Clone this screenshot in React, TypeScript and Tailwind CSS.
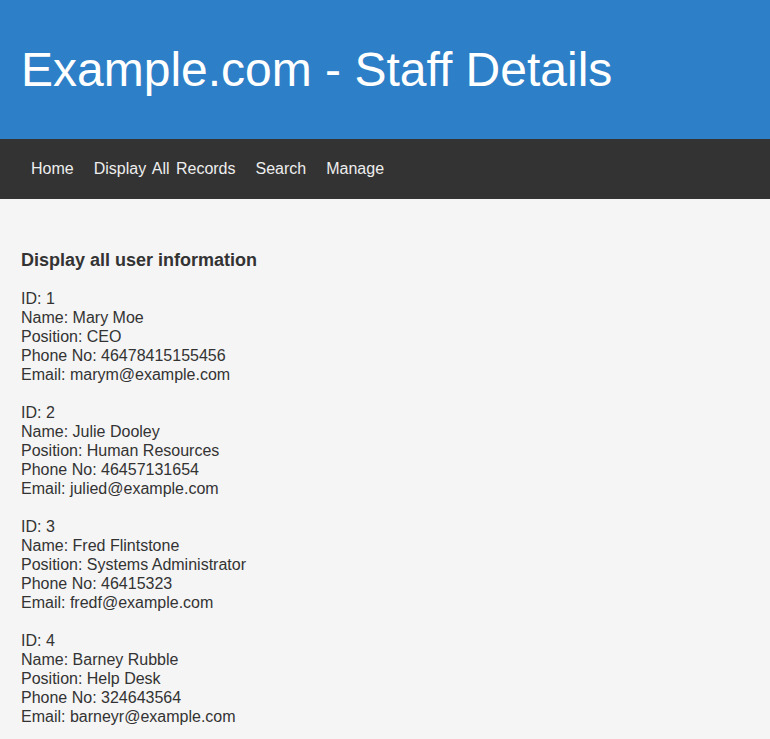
const staff = [
  { id: 1, name: "Mary Moe", position: "CEO", phone: "46478415155456", email: "marym@example.com" },
  { id: 2, name: "Julie Dooley", position: "Human Resources", phone: "46457131654", email: "julied@example.com" },
  { id: 3, name: "Fred Flintstone", position: "Systems Administrator", phone: "46415323", email: "fredf@example.com" },
  { id: 4, name: "Barney Rubble", position: "Help Desk", phone: "324643564", email: "barneyr@example.com" },
];

const links = ["Home", "Display All Records", "Search", "Manage"];

export default function App() {
  return (
    <div className="min-h-screen bg-[#f5f5f5] text-[#333333] font-['Liberation_Sans',Arial,sans-serif]">
      <header className="h-[139px] bg-[#2d7fc7] flex items-center px-[21px]">
        <h1 className="text-[48px] leading-none text-white font-normal">Example.com - Staff Details</h1>
      </header>
      <nav className="h-[60px] bg-[#333333] flex items-center pl-[21px]">
        {links.map((l) => (
          <a key={l} href="#" className="px-[10px] text-[16px] text-[#eeeeee] no-underline [word-spacing:2px]">
            {l}
          </a>
        ))}
      </nav>
      <main className="px-[21px] pt-[50px] pb-[20px]">
        <h3 className="text-[18px] leading-[22px] font-bold mb-[18px]">Display all user information</h3>
        {staff.map((s) => (
          <div key={s.id} className="text-[16px] leading-[19px] mb-[19px]">
            <div>ID: {s.id}</div>
            <div>Name: {s.name}</div>
            <div>Position: {s.position}</div>
            <div>Phone No: {s.phone}</div>
            <div>Email: {s.email}</div>
          </div>
        ))}
      </main>
    </div>
  );
}
